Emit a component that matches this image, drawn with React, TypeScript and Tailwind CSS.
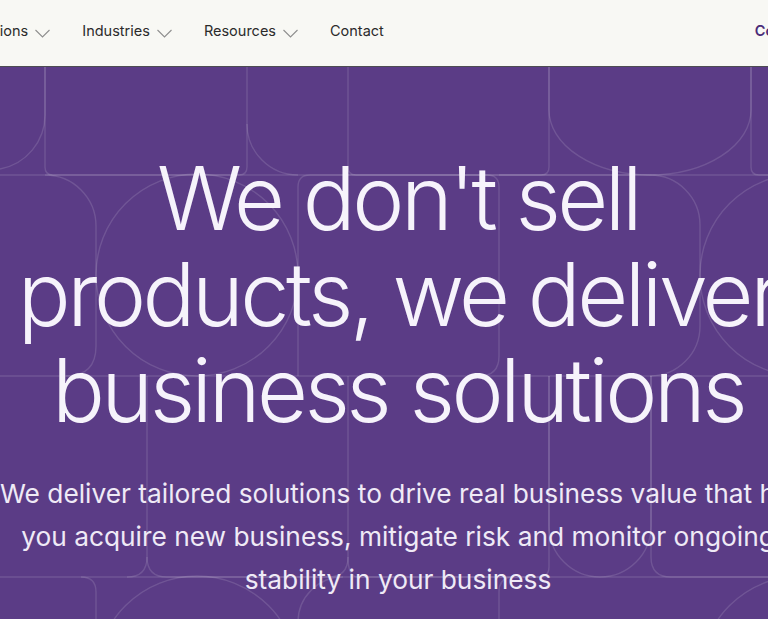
const navItems = [
  { label: "Solutions", menu: true },
  { label: "Industries", menu: true },
  { label: "Resources", menu: true },
  { label: "Contact", menu: false },
];

function Chevron() {
  return (
    <svg className="ml-[7px] mt-[4px]" width="15" height="9" viewBox="0 0 15 9" fill="none" stroke="#8f8f8f" strokeWidth="1.1">
      <path d="M0.5,1 L7.5,8 L14.5,1" />
    </svg>
  );
}

function Pattern() {
  // decorative line pattern, coordinates relative to the hero top
  const s = "rgba(255,255,255,0.13)";
  return (
    <svg className="absolute inset-0 h-full w-full" viewBox="0 0 796 620" preserveAspectRatio="xMinYMin slice" fill="none" stroke={s} strokeWidth="1.4">
      {/* row 1 */}
      <path d="M45,0 V48 A55,55 0 0 1 0,102" />
      <path d="M45,0 V100 Q45,108 53,108 H239 Q247,108 247,100 V0" />
      <path d="M247,57 A51,51 0 0 0 298,108" />
      <path d="M348,0 V100 Q348,108 356,108 H541 Q549,108 549,100 V0" />
      <path d="M549,0 V43 A101,65 0 0 0 751,43 V0" />
      <path d="M751,0 V100 Q751,108 759,108 H796" />
      <path d="M0,108 H796" />
      {/* row 2 */}
      <path d="M45,108 A51,51 0 0 1 96,159 V279 Q96,309 66,309" />
      <circle cx="197" cy="208" r="101" />
      <path d="M298,309 V120 Q298,108 310,108 H487 Q499,108 499,120 V289 Q499,309 479,309" />
      <path d="M499,108 H650 A50,50 0 0 1 700,158 V259 A50,50 0 0 1 650,309" />
      <circle cx="801" cy="208" r="101" />
      <path d="M0,309 H796" />
      {/* row 3 */}
      <path d="M147,309 V490 Q147,510 167,510 H328 Q348,510 348,490 V309" />
      <path d="M127,510 Q147,510 147,490" />
      <path d="M348,490 Q348,510 358,510 H539 Q549,510 549,500 V309" />
      <path d="M549,309 V459 A51,51 0 0 0 651,459 V309" />
      <path d="M651,309 V490 Q651,510 671,510 H796" />
      <path d="M0,510 H796" />
      {/* row 4 */}
      <path d="M81,510 Q96,510 96,525 V620" />
      <circle cx="197" cy="610" r="101" />
      <path d="M298,620 V555 A45,45 0 0 1 343,510" />
      <path d="M499,620 V525 Q499,510 514,510" />
      <circle cx="801" cy="610" r="101" />
    </svg>
  );
}

export default function App() {
  return (
    <div className="w-full overflow-hidden bg-[#5b3c86]" style={{ fontFamily: "Inter, 'Open Sans', sans-serif" }}>
      <div className="w-[796px]">
        {/* Header */}
        <header className="flex h-[67px] items-center border-b border-[#4d4d52] bg-[#f8f8f4] pb-[4px]">
          <nav className="ml-[-35px] flex items-center gap-8 text-[14.5px] text-[#2b2b2b]">
            {navItems.map((item) => (
              <div key={item.label} className="flex items-center">
                <span>{item.label}</span>
                {item.menu && <Chevron />}
              </div>
            ))}
          </nav>
          <span className="ml-[371px] whitespace-nowrap text-[14.5px] font-semibold text-[#4a2c78]">Contact us</span>
        </header>

        {/* Hero */}
        <section className="relative h-[560px] bg-[#5b3c86]">
          <Pattern />
          <div className="relative pt-[83px] text-center">
            <h1 className="whitespace-nowrap text-[88px] font-light leading-[96px] tracking-[-3.5px] text-[#f6f3fb]">
              We don't sell
              <br />
              products, we deliver
              <br />
              business solutions
            </h1>
            <p className="mt-[34px] whitespace-nowrap text-[26.3px] font-normal leading-[43px] text-[#efeaf6]">
              We deliver tailored solutions to drive real business value that helps
              <br />
              you acquire new business, mitigate risk and monitor ongoing
              <br />
              stability in your business
            </p>
          </div>
        </section>
      </div>
    </div>
  );
}
